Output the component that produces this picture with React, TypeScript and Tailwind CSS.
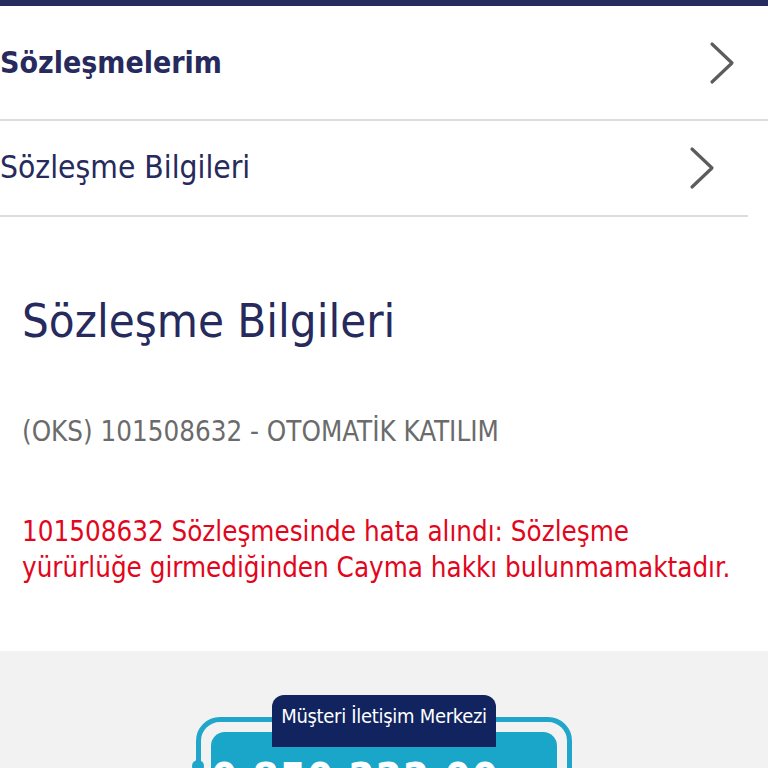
const font = "font-['DejaVu_Sans_Condensed','DejaVu_Sans',sans-serif]";

function Chevron() {
  return (
    <svg width="26" height="44" viewBox="0 0 26 44" fill="none" className="shrink-0">
      <polyline
        points="3,3 23,22 3,41"
        stroke="#5c5c5c"
        strokeWidth="3.2"
        strokeLinecap="round"
        strokeLinejoin="round"
      />
    </svg>
  );
}

function Row({
  label,
  bold,
  inset,
  height,
}: {
  label: string;
  bold?: boolean;
  inset?: boolean;
  height: string;
}) {
  return (
    <div className={inset ? "mr-[20px]" : ""}>
      <div className={`flex items-center justify-between pr-[33px] ${height}`}>
        <span
          className={`leading-none text-[#262a5c] ${bold ? "text-[30px] font-bold" : "text-[31.5px] font-normal"}`}
        >
          {label}
        </span>
        <Chevron />
      </div>
      <div className="h-[2px] bg-[#dcdcdc]" />
    </div>
  );
}

export default function App() {
  return (
    <div className={`h-[768px] w-[768px] overflow-hidden bg-white ${font}`}>
      <div className="h-[6px] bg-[#262d5e]" />

      {/* Menü satırları */}
      <Row label="Sözleşmelerim" bold height="h-[113px]" />
      <Row label="Sözleşme Bilgileri" inset height="h-[94px]" />

      {/* Sözleşme detayı */}
      <div className="px-[22px] pb-[66px]">
        <h1 className="mt-[78px] text-[47px] font-normal leading-[52px] text-[#262a5c]">
          Sözleşme Bilgileri
        </h1>
        <p className="mt-[66px] text-[27.5px] leading-[36px] text-[#6b6b6b]">
          (OKS) 101508632 - OTOMATİK KATILIM
        </p>
        <p className="mt-[64px] text-[27.5px] leading-[36px] text-[#e2061c]">
          101508632 Sözleşmesinde hata alındı: Sözleşme
          <br />
          yürürlüğe girmediğinden Cayma hakkı bulunmamaktadır.
        </p>
      </div>

      {/* Müşteri iletişim merkezi */}
      <div className="flex h-[200px] justify-center bg-[#f2f2f2] pt-[66px]">
        <div className="relative h-[120px] w-[376px] rounded-[24px] border-[5px] border-[#1fa6ca] p-[10px]">
          <div className="flex h-full justify-center rounded-[14px] bg-[#1aa6c9] pt-[26px]">
            <span className="text-[42px] font-bold leading-none tracking-[1px] text-white">
              0 850 222 00 00
            </span>
          </div>
          <div className="absolute left-1/2 top-[-27px] flex h-[52px] w-[224px] -translate-x-1/2 justify-center rounded-t-[12px] bg-[#11245f] pt-[8px]">
            <span className="text-[20px] leading-[26px] tracking-[-0.3px] text-white">
              Müşteri İletişim Merkezi
            </span>
          </div>
          <div className="absolute left-[-9px] top-[38px] h-[12px] w-[12px] rounded-full bg-[#1fa6ca]" />
        </div>
      </div>
    </div>
  );
}
